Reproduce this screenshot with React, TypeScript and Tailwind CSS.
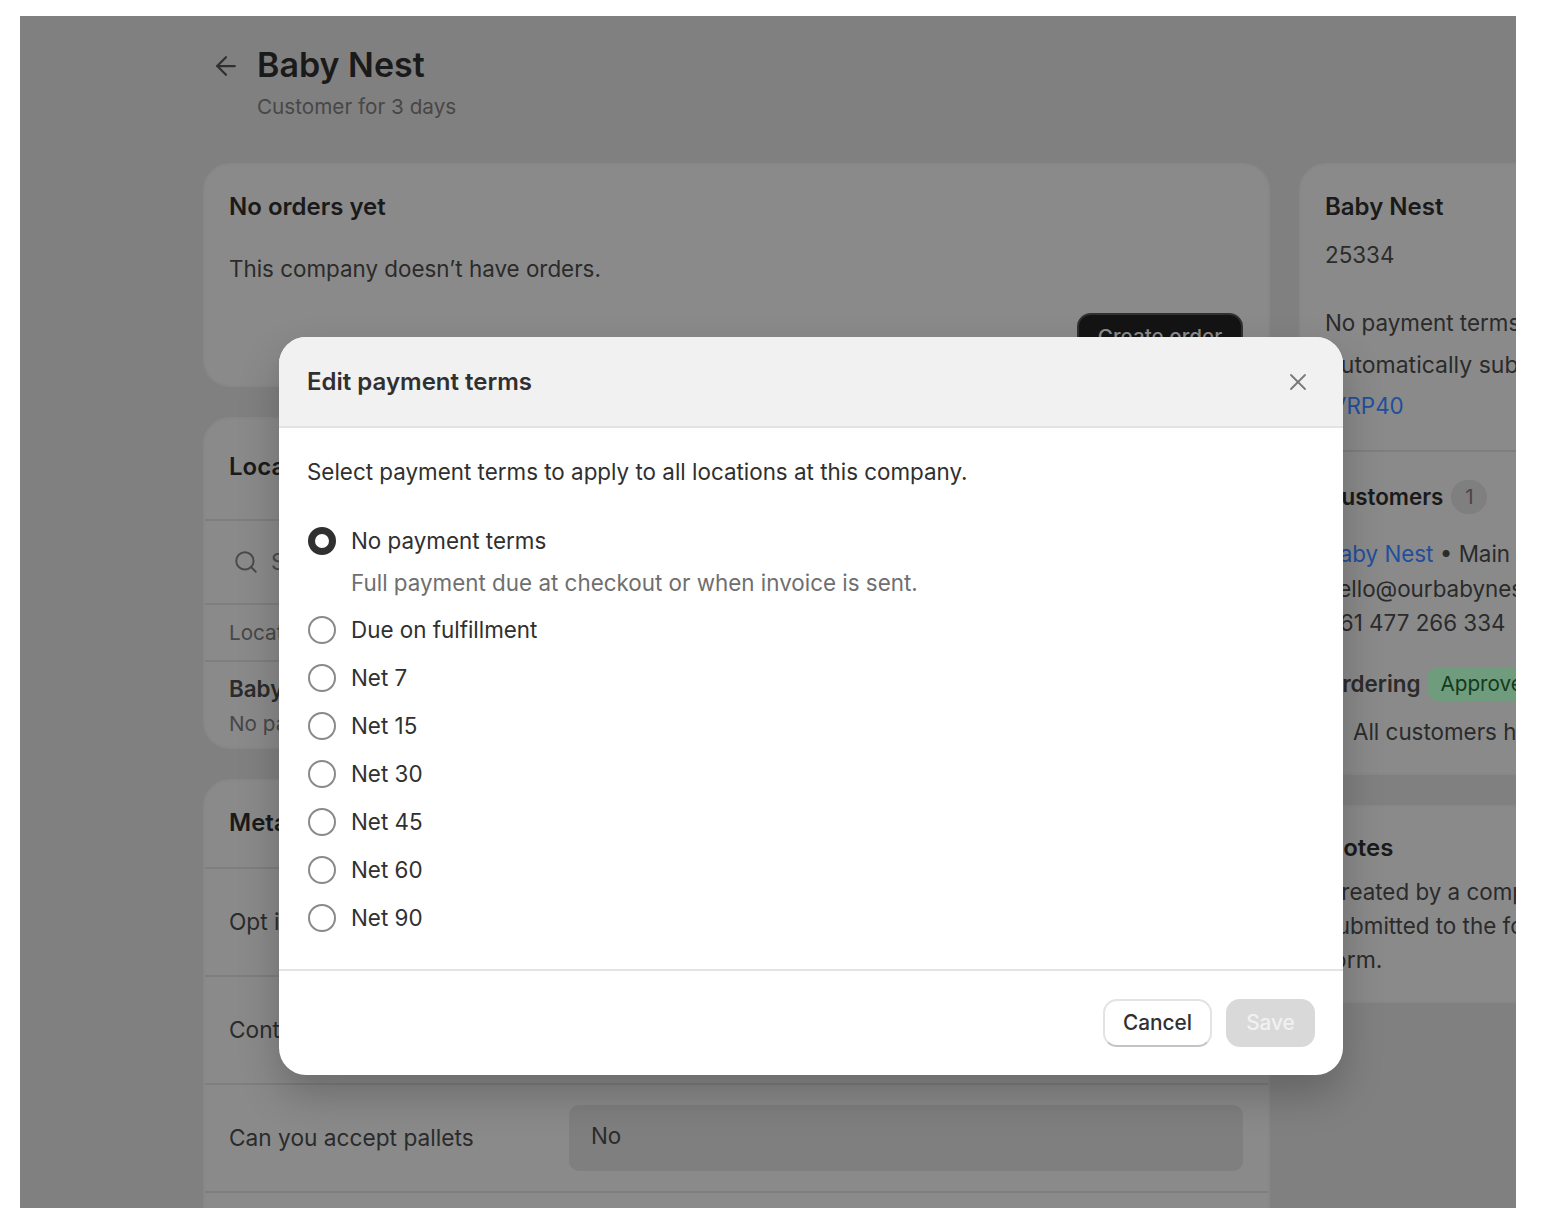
import { ArrowLeft, Search, X } from "lucide-react";

const terms = ["Due on fulfillment", "Net 7", "Net 15", "Net 30", "Net 45", "Net 60", "Net 90"];

function Radio({ checked = false }: { checked?: boolean }) {
  return (
    <span
      className={`mx-[1px] block h-[28px] w-[28px] shrink-0 rounded-full bg-white ${
        checked ? "border-[7px] border-[#303030]" : "border-2 border-[#8a8a8a]"
      }`}
    />
  );
}

function Row({ label, value }: { label: string; value?: string }) {
  return (
    <div className="flex h-[108px] items-center border-t-2 border-[#7e7e7e] pl-[24px] pr-[25px]">
      <span className="w-[340px] shrink-0 text-[22.7px]">{label}</span>
      <div className="flex h-[66px] flex-1 items-center rounded-[10px] bg-[#7f7f7f] px-[22px] pb-[4px]">{value}</div>
    </div>
  );
}

function EditTermsModal() {
  return (
    <div className="absolute left-[259px] top-[321px] w-[1064px] overflow-hidden rounded-[27px] bg-white text-[22.4px] leading-[36px] text-[#303030] shadow-[0_20px_40px_rgba(0,0,0,0.22)]">
      <div className="flex h-[91px] items-center justify-between border-b-2 border-[#e3e3e3] bg-[#f1f1f1] pl-[28px] pr-[31px]">
        <span className="text-[24px] font-semibold">Edit payment terms</span>
        <X size={28} strokeWidth={1.6} className="text-[#7a7a7a]" />
      </div>
      <div className="px-[28px] pb-[27px] pt-[26px]">
        <p>Select payment terms to apply to all locations at this company.</p>
        <div className="mt-[27px]">
          <div className="flex h-[48px] items-center gap-[14px]">
            <Radio checked />
            <span>No payment terms</span>
          </div>
          <p className="flex h-[41px] items-center pb-[6px] pl-[44px] text-[#6f6f6f]">Full payment due at checkout or when invoice is sent.</p>
          {terms.map((t) => (
            <div key={t} className="flex h-[48px] items-center gap-[14px]">
              <Radio />
              <span>{t}</span>
            </div>
          ))}
        </div>
      </div>
      <div className="flex h-[106px] items-center justify-end gap-[14px] border-t-2 border-[#e3e3e3] px-[28px] text-[20.8px]">
        <button className="h-[48px] w-[109px] rounded-[14px] border-2 border-[#e3e3e3] border-b-[#c4c4c4] bg-white font-medium text-[#303030]">Cancel</button>
        <button className="h-[48px] w-[89px] rounded-[14px] bg-[#d9d9d9] font-medium text-[#f1f1f1]">Save</button>
      </div>
    </div>
  );
}

export default function App() {
  return (
    <div className="h-[1218px] bg-white pl-[20px] pt-[16px] [font-family:Inter,sans-serif]">
      <div className="relative h-[1192px] w-[1496px] overflow-hidden bg-[#808080] text-[22.4px] leading-[36px] text-[#2b2b2b]">
        <div className="pl-[183px]">
          <header className="flex h-[147px] items-start pt-[29px]">
            <ArrowLeft size={30} strokeWidth={1.8} className="ml-[8px] mt-[6px] text-[#303030]" />
            <div className="ml-[16px]">
              <h1 className="text-[34px] font-semibold leading-[40px] text-[#1a1a1a]">Baby Nest</h1>
              <p className="mt-[4px] text-[20.7px] leading-[36px] text-[#474747]">Customer for 3 days</p>
            </div>
          </header>

          <div className="flex items-start gap-[29px]">
            <div className="flex w-[1067px] shrink-0 flex-col gap-[30px]">
              <section className="relative h-[224px] rounded-[27px] border-2 border-[#878787] bg-[#8a8a8a] px-[24px] pt-[24px]">
                <h2 className="text-[24px] font-semibold text-[#1a1a1a]">No orders yet</h2>
                <p className="mt-[26px]">This company doesn’t have orders.</p>
                <button className="absolute right-[25px] top-[148px] h-[48px] w-[166px] rounded-[14px] border-2 border-[#303030] bg-[#141414] text-[20.7px] font-medium text-[#8c8c8c]">Create order</button>
              </section>

              <section className="h-[332px] overflow-hidden rounded-[27px] border-2 border-[#878787] bg-[#8a8a8a]">
                <h2 className="flex h-[100px] items-center px-[24px] pb-[4px] text-[24px] font-semibold text-[#1a1a1a]">Locations</h2>
                <div className="flex h-[84px] items-center gap-[12px] border-t-2 border-[#7e7e7e] px-[28px] text-[#4a4a4a]">
                  <Search size={26} strokeWidth={1.8} />
                  <span>Search</span>
                </div>
                <div className="flex h-[57px] items-center border-t-2 border-[#7e7e7e] px-[24px] text-[20.7px] text-[#474747]">Location</div>
                <div className="border-t-2 border-[#7e7e7e] px-[24px] pt-[9px]">
                  <p className="font-semibold">Baby Nest</p>
                  <p className="text-[20.7px] leading-[34px] text-[#474747]">No payment terms</p>
                </div>
              </section>

              <section className="h-[500px] rounded-t-[27px] border-2 border-[#878787] bg-[#8a8a8a]">
                <h2 className="flex h-[86px] items-center px-[24px] pb-[3px] text-[24px] font-semibold text-[#1a1a1a]">Metafields</h2>
                <Row label="Opt in" />
                <Row label="Contact" />
                <Row label="Can you accept pallets" value="No" />
                <Row label="" />
              </section>
            </div>

            <div className="flex w-[420px] shrink-0 flex-col gap-[30px] whitespace-nowrap">
              <section className="h-[612px] rounded-[27px] border-2 border-[#878787] bg-[#8a8a8a]">
                <div className="h-[285px] px-[24px] pt-[24px]">
                  <h2 className="text-[24px] font-semibold text-[#1a1a1a]">Baby Nest</h2>
                  <p className="mt-[12px]">25334</p>
                  <p className="mt-[32px]">No payment terms</p>
                  <p className="mt-[6px] text-[23px]">Automatically submit</p>
                  <p className="ml-[6px] mt-[5px] text-[#1f4f9e]">VRP40</p>
                </div>
                <div className="border-t-2 border-[#7e7e7e] px-[24px] pt-[27px]">
                  <h2 className="flex items-center gap-[8px] font-semibold text-[#1a1a1a]">
                    Customers
                    <span className="flex h-[34px] w-[36px] items-center justify-center rounded-full bg-[#7f7f7f] text-[20.7px] font-normal text-[#474747]">1</span>
                  </h2>
                  <p className="mt-[21px]"><span className="text-[#1f4f9e]">Baby Nest</span> • Main</p>
                  <p className="leading-[34px]">hello@ourbabynest.com</p>
                  <p className="leading-[34px]">+61 477 266 334</p>
                  <div className="mt-[26px] flex items-center gap-[6px]">
                    <span className="font-semibold">Ordering</span>
                    <span className="flex h-[34px] items-center rounded-[12px] bg-[#6f9c7c] px-[14px] text-[20.7px] text-[#123a20]">Approved</span>
                  </div>
                  <p className="mt-[12px] pl-[28px]">All customers have</p>
                </div>
              </section>

              <section className="h-[198px] rounded-t-[27px] border-2 border-[#878787] bg-[#8a8a8a] px-[24px] pt-[23px]">
                <h2 className="text-[24px] font-semibold text-[#1a1a1a]">Notes</h2>
                <p className="mt-[9px] leading-[34px]">Created by a company</p>
                <p className="leading-[34px]">submitted to the form</p>
                <p className="text-[23px] leading-[34px]">form.</p>
              </section>
            </div>
          </div>
        </div>

        <EditTermsModal />
      </div>
    </div>
  );
}
